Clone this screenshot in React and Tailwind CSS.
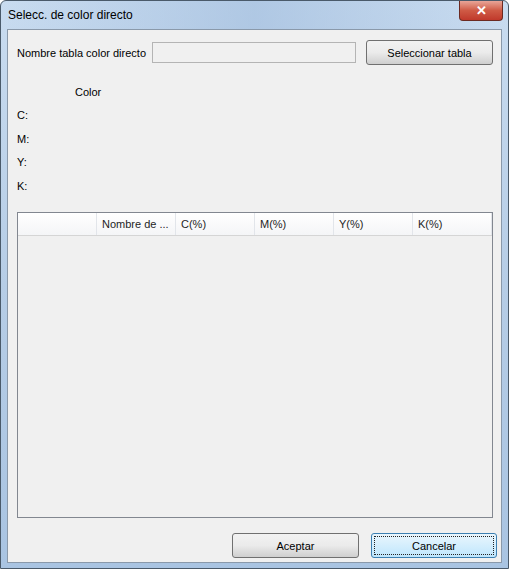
import React from "react";

const font = { fontFamily: '"Liberation Sans", Arial, sans-serif' };

const Boton = ({ children, focused }) => (
  <button
    className={
      focused
        ? "h-[25px] w-[126px] rounded-[3px] border border-[#3c7fb1] bg-gradient-to-b from-[#eaf6fd] to-[#bee6fd] p-[2px] text-[11px] text-black"
        : "h-[25px] w-[127px] rounded-[3px] border border-[#707070] bg-gradient-to-b from-[#f2f2f2] via-[#ebebeb] to-[#cfcfcf] text-[11px] text-black"
    }
  >
    {focused ? (
      <span className="flex h-full w-full items-center justify-center border border-dotted border-[#222]">
        {children}
      </span>
    ) : (
      children
    )}
  </button>
);

const columnas = ["", "Nombre de ...", "C(%)", "M(%)", "Y(%)", "K(%)"];

export default function App() {
  return (
    <div
      style={font}
      className="flex h-[569px] w-[509px] flex-col overflow-hidden rounded-t-[6px] border border-[#4a5a6a] bg-gradient-to-b from-[#c9dcf0] via-[#b6cde6] to-[#a9c4e2] text-[11px] leading-[14px] text-black"
    >
      {/* Barra de título */}
      <div className="flex h-[28px] shrink-0 items-start bg-gradient-to-r from-transparent via-[#9fbbdc]/60 to-transparent">
        <div className="whitespace-nowrap pl-[7px] pt-[7px] text-[12px] text-black">Selecc. de color directo</div>
        <div className="flex-1" />
        <div className="mr-[5px] flex h-[20px] w-[44px] items-center justify-center rounded-b-[4px] border border-t-0 border-[#6b2a22] bg-gradient-to-b from-[#e8a598] via-[#cf5a45] to-[#c0392b] text-[13px] font-bold text-white">
          ✕
        </div>
      </div>

      {/* Área cliente */}
      <div className="mx-[6px] flex shrink-0 flex-col border border-[#8a99aa] bg-[#f0f0f0] pb-[4px]">
        <div className="flex items-center pl-[9px] pt-[10px]">
          <span className="w-[135px] whitespace-nowrap">Nombre tabla color directo</span>
          <div className="h-[21px] w-[204px] border border-[#b4b4b4] bg-[#f0f0f0]" />
          <div className="ml-[10px]">
            <Boton>Seleccionar tabla</Boton>
          </div>
        </div>

        <div className="mt-[20px] pl-[67px]">Color</div>

        <div className="mt-[4px] flex flex-col pl-[9px]">
          <div className="flex h-[24px] items-center">C:</div>
          <div className="flex h-[23px] items-center">M:</div>
          <div className="flex h-[24px] items-center">Y:</div>
          <div className="flex h-[23px] items-center">K:</div>
        </div>

        {/* Tabla */}
        <div className="ml-[9px] mt-[15px] h-[306px] w-[476px] border border-[#828790] bg-[#f0f0f0]">
          <div className="flex h-[23px] border-b border-[#d5d5d5] bg-gradient-to-b from-white to-[#f4f5f7]">
            {columnas.map((c, i) => (
              <div
                key={i}
                className="flex w-[79px] items-center whitespace-nowrap border-r border-[#e2e5ea] pl-[5px] text-[#1e1e1e]"
              >
                {c}
              </div>
            ))}
          </div>
        </div>

        <div className="mt-[15px] flex justify-end gap-[12px] pr-[4px]">
          <Boton>Aceptar</Boton>
          <Boton focused>Cancelar</Boton>
        </div>
      </div>
    </div>
  );
}
